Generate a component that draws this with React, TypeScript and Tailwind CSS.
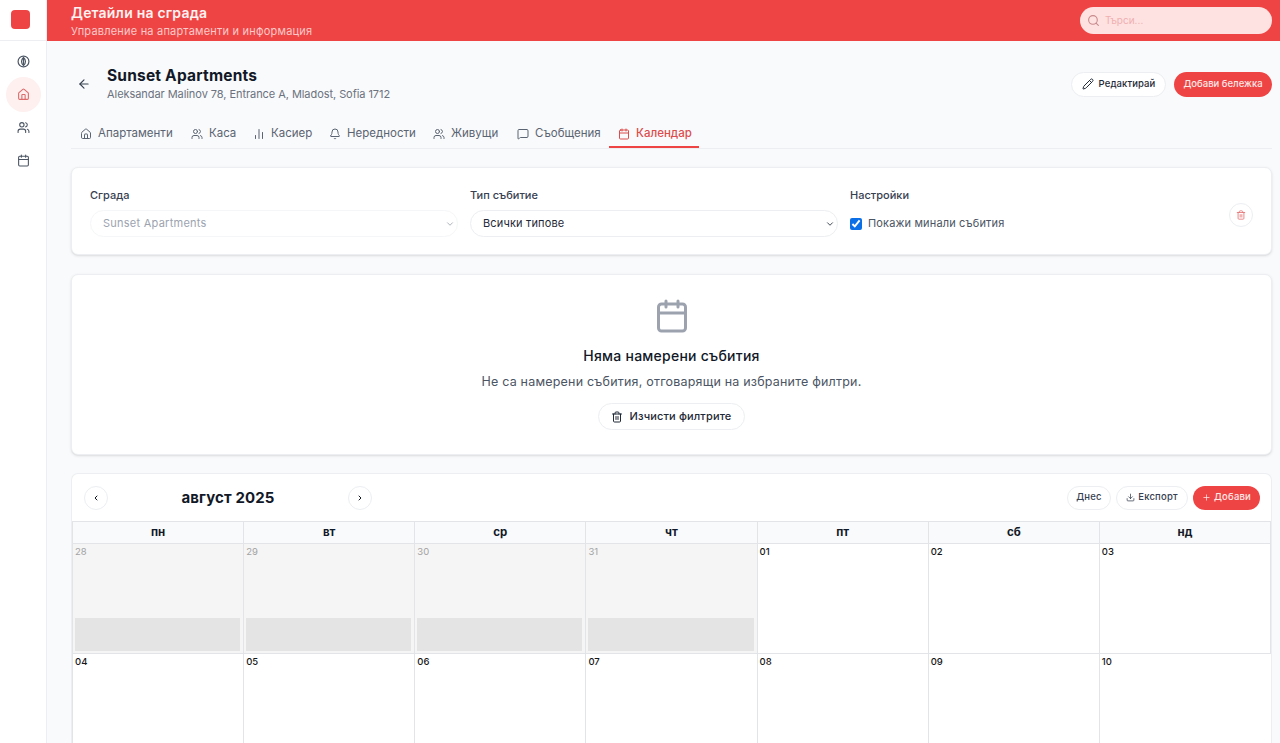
import React from 'react';
import {
  ArrowLeft, Bell, Calendar, ChartNoAxesColumn, ChevronDown, ChevronLeft, ChevronRight, Download, Home,
  MessageSquare, Pencil, Plus, Search, Trash2, Users,
} from 'lucide-react';

const tabs = [
  { label: 'Апартаменти', icon: Home, width: 'w-[111px]' },
  { label: 'Каса', icon: Users, width: 'w-[62px]' },
  { label: 'Касиер', icon: ChartNoAxesColumn, width: 'w-[76px]' },
  { label: 'Нередности', icon: Bell, width: 'w-[104px]' },
  { label: 'Живущи', icon: Users, width: 'w-[84px]' },
  { label: 'Съобщения', icon: MessageSquare, width: 'w-[101px]' },
  { label: 'Календар', icon: Calendar, width: 'w-[90px]', active: true },
];

const weekDays = ['пн', 'вт', 'ср', 'чт', 'пт', 'сб', 'нд'];
const firstRow = ['28', '29', '30', '31', '01', '02', '03'];
const secondRow = ['04', '05', '06', '07', '08', '09', '10'];

const App: React.FC = () => {
  return (
    <div className="flex h-[743px] overflow-hidden bg-[#f9fafb] font-['Inter','Noto_Sans',sans-serif] text-[#111827]">
      {/* Sidebar */}
      <aside className="w-[47px] shrink-0 border-r border-[#eceef1] bg-white">
        <div className="flex h-[41px] items-center justify-center border-b border-[#eceef1]">
          <div className="ml-[-6px] mt-[-1px] h-[19px] w-[19px] rounded-[4px] bg-[#ef4444]" />
        </div>
        <div className="flex flex-col items-center gap-[20px] pt-[14px] text-[#4b5563]">
          <svg width="13" height="13" viewBox="0 0 24 24" fill="none" stroke="currentColor" strokeWidth="2.2" strokeLinecap="round" strokeLinejoin="round">
            <circle cx="12" cy="12" r="10" />
            <path d="M12 4.5c2.6 2.2 3.6 4.8 3.6 7.5s-1 5.3-3.6 7.5c-2.6-2.2-3.6-4.8-3.6-7.5s1-5.3 3.6-7.5z" />
            <path d="M12 8v8" />
          </svg>
          <div className="relative flex h-[13px] w-[13px] items-center justify-center text-[#dc6b6b]">
            <div className="absolute h-[35px] w-[35px] rounded-full bg-[#fdf0ef]" />
            <Home size={13} className="relative" />
          </div>
          <Users size={13} />
          <Calendar size={13} />
        </div>
      </aside>

      <div className="flex min-w-0 flex-1 flex-col">
        {/* Top bar */}
        <header className="flex h-[41px] shrink-0 items-center justify-between bg-[#ef4444] pl-[24px] pr-[8px]">
          <div className="pt-[1px]">
            <h1 className="text-[14px] font-semibold leading-[18px] tracking-[0.2px] text-[#fdf2f2]">Детайли на сграда</h1>
            <p className="mt-[1px] text-[11px] leading-[16px] tracking-[0.2px] text-[#fbc9c9]">Управление на апартаменти и информация</p>
          </div>
          <div className="flex h-[27px] w-[192px] items-center gap-[5px] rounded-full bg-[#fee2e2] pl-[7px]">
            <Search size={13} className="text-[#c98a8a]" />
            <span className="text-[10px] text-[#f0b0b0]">Търси...</span>
          </div>
        </header>

        <main className="min-h-0 flex-1 pl-[24px] pr-[8px]">
          {/* Building heading */}
          <div className="flex h-[83px] items-center justify-between pt-[3px]">
            <div className="flex items-center">
              <ArrowLeft size={14} className="ml-[6px] mr-[16px] text-[#374151]" />
              <div>
                <h2 className="text-[15.5px] font-bold leading-[20px] tracking-[0.2px]">Sunset Apartments</h2>
                <p className="text-[11px] leading-[16px] tracking-[-0.06px] text-[#6b7280]">Aleksandar Malinov 78, Entrance A, Mladost, Sofia 1712</p>
              </div>
            </div>
            <div className="flex items-center gap-[8px]">
              <button className="flex h-[25px] w-[95px] items-center justify-center gap-[5px] rounded-full border border-[#eceef1] bg-white text-[9.5px] font-medium tracking-[0.1px] text-[#1f2937]">
                <Pencil size={12} />
                Редактирай
              </button>
              <button className="h-[25px] w-[98px] rounded-full bg-[#ef4444] text-[9.5px] font-medium text-[#fde8e8]">
                Добави бележка
              </button>
            </div>
          </div>

          {/* Tabs */}
          <nav className="flex h-[25px] border-b border-[#eceef1]">
            {tabs.map(tab => {
              const Icon = tab.icon;
              return (
                <div
                  key={tab.label}
                  className={`flex h-[24px] items-center gap-[6px] whitespace-nowrap border-b-2 pb-[3px] pl-[9px] text-[11.5px] ${tab.width} ${
                    tab.active ? 'border-[#ef4444] font-medium text-[#dc4c4c]' : 'border-transparent text-[#5b6472]'
                  }`}
                >
                  <Icon size={12} />
                  {tab.label}
                </div>
              );
            })}
          </nav>

          {/* Filters */}
          <section className="mt-[18px] flex h-[88px] items-start rounded-[7px] border border-[#eceef1] bg-white pl-[18px] pr-[18px] pt-[20px] shadow-sm">
            <div className="w-[368px]">
              <div className="text-[11px] font-medium leading-[14px] text-[#374151]">Сграда</div>
              <div className="mt-[8px] flex h-[27px] items-center justify-between rounded-full border border-[#f5f6f7] pl-[12px] pr-[2px] text-[11px] tracking-[0.25px] text-[#9ca3af]">
                Sunset Apartments
                <ChevronDown size={10} />
              </div>
            </div>
            <div className="ml-[12px] w-[368px]">
              <div className="text-[11px] font-medium leading-[14px] text-[#374151]">Тип събитие</div>
              <div className="mt-[8px] flex h-[27px] items-center justify-between rounded-full border border-[#eceef1] pl-[12px] pr-[2px] text-[11px] tracking-[0.15px] text-[#1f2937]">
                Всички типове
                <ChevronDown size={10} />
              </div>
            </div>
            <div className="ml-[12px] flex-1">
              <div className="text-[11px] font-medium leading-[14px] text-[#374151]">Настройки</div>
              <label className="mt-[8px] flex h-[27px] items-center gap-[6px] text-[11px] tracking-[0.15px] text-[#4b5563]">
                <input type="checkbox" defaultChecked className="h-[12px] w-[12px] accent-[#0b6fe8]" />
                Покажи минали събития
              </label>
            </div>
            <button className="mt-[15px] flex h-[24px] w-[24px] items-center justify-center rounded-full border border-[#eceef1] text-[#e57373]">
              <Trash2 size={10} />
            </button>
          </section>

          {/* Empty state */}
          <section className="mt-[19px] flex h-[181px] flex-col items-center rounded-[7px] border border-[#eceef1] bg-white pt-[23px] shadow-sm">
            <Calendar size={36} strokeWidth={2} className="text-[#9ca3af]" />
            <h3 className="mt-[13px] text-[14px] font-medium leading-[18px] tracking-[0.25px]">Няма намерени събития</h3>
            <p className="mt-[9px] text-[12.5px] leading-[16px] tracking-[0.2px] text-[#4b5563]">Не са намерени събития, отговарящи на избраните филтри.</p>
            <button className="mt-[13px] flex h-[27px] w-[147px] items-center justify-center gap-[6px] rounded-full border border-[#eceef1] text-[11px] font-medium tracking-[0.15px] text-[#1f2937]">
              <Trash2 size={12} />
              Изчисти филтрите
            </button>
          </section>

          {/* Calendar */}
          <section className="mt-[18px] rounded-t-[7px] border border-b-0 border-[#eceef1] bg-white">
            <div className="flex h-[47px] items-center justify-between pl-[12px] pr-[11px]">
              <div className="flex items-center">
                <button className="flex h-[24px] w-[24px] items-center justify-center rounded-full border border-[#eceef1]">
                  <ChevronLeft size={8} strokeWidth={3} />
                </button>
                <div className="mt-[1px] w-[240px] text-center text-[15px] font-bold tracking-[0.1px]">август 2025</div>
                <button className="flex h-[24px] w-[24px] items-center justify-center rounded-full border border-[#eceef1]">
                  <ChevronRight size={8} strokeWidth={3} />
                </button>
              </div>
              <div className="flex items-center gap-[5px] text-[9.5px] font-medium tracking-[0.2px] text-[#374151]">
                <button className="h-[24px] w-[44px] rounded-full border border-[#eceef1]">Днес</button>
                <button className="flex h-[24px] w-[72px] items-center justify-center gap-[3px] rounded-full border border-[#eceef1]">
                  <Download size={9} />
                  Експорт
                </button>
                <button className="flex h-[24px] w-[67px] items-center justify-center gap-[3px] rounded-full bg-[#ef4444] text-[#fde8e8]">
                  <Plus size={9} />
                  Добави
                </button>
              </div>
            </div>

            <div className="grid grid-cols-7 border-l border-t border-[#e2e4e8]">
              {weekDays.map(day => (
                <div key={day} className="flex h-[22px] items-center justify-center border-b border-r border-[#e2e4e8] bg-[#f9fafb] text-[11.5px] font-bold last:border-r-0">
                  {day}
                </div>
              ))}
              {firstRow.map((date, i) => {
                const outside = i < 4;
                return (
                  <div key={date} className={`flex h-[110px] flex-col justify-between border-b border-r border-[#e2e4e8] pb-[2px] pl-[2px] pr-[3px] pt-[2px] last:border-r-0 ${outside ? 'bg-[#f5f5f5]' : 'bg-white'}`}>
                    <span className={`text-[9.5px] leading-[11px] ${outside ? 'text-[#a3a3a3]' : 'font-medium text-[#171717]'}`}>{date}</span>
                    {outside && <div className="h-[33px] bg-[#e4e4e4]" />}
                  </div>
                );
              })}
              {secondRow.map(date => (
                <div key={date} className="h-[120px] border-r border-[#e2e4e8] pl-[2px] pt-[2px] last:border-r-0">
                  <div className="text-[9.5px] font-medium leading-[11px] text-[#171717]">{date}</div>
                </div>
              ))}
            </div>
          </section>
        </main>
      </div>
    </div>
  );
};

export default App;
